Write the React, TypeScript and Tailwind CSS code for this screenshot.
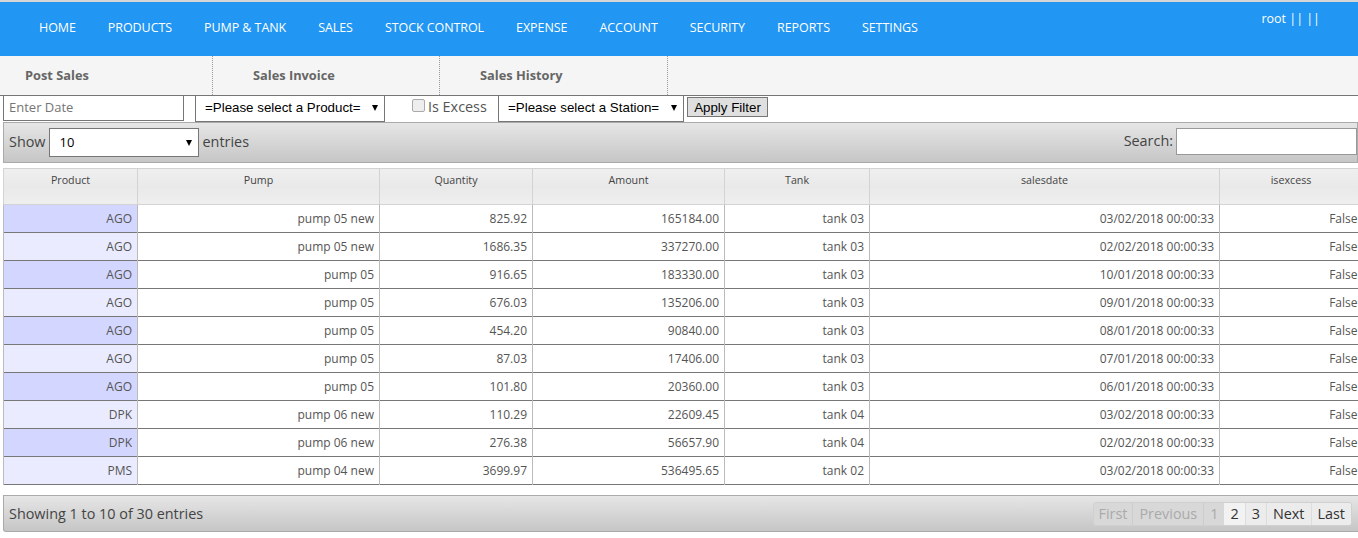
const navItems = ["HOME", "PRODUCTS", "PUMP & TANK", "SALES", "STOCK CONTROL", "EXPENSE", "ACCOUNT", "SECURITY", "REPORTS", "SETTINGS"]

const columns = [
  { name: "Product", width: "w-[134px]" },
  { name: "Pump", width: "w-[242px]" },
  { name: "Quantity", width: "w-[153px]" },
  { name: "Amount", width: "w-[192px]" },
  { name: "Tank", width: "w-[145px]" },
  { name: "salesdate", width: "w-[350px]" },
  { name: "isexcess", width: "w-[143px]" },
]

const rows = [
  ["AGO", "pump 05 new", "825.92", "165184.00", "tank 03", "03/02/2018 00:00:33", "False"],
  ["AGO", "pump 05 new", "1686.35", "337270.00", "tank 03", "02/02/2018 00:00:33", "False"],
  ["AGO", "pump 05", "916.65", "183330.00", "tank 03", "10/01/2018 00:00:33", "False"],
  ["AGO", "pump 05", "676.03", "135206.00", "tank 03", "09/01/2018 00:00:33", "False"],
  ["AGO", "pump 05", "454.20", "90840.00", "tank 03", "08/01/2018 00:00:33", "False"],
  ["AGO", "pump 05", "87.03", "17406.00", "tank 03", "07/01/2018 00:00:33", "False"],
  ["AGO", "pump 05", "101.80", "20360.00", "tank 03", "06/01/2018 00:00:33", "False"],
  ["DPK", "pump 06 new", "110.29", "22609.45", "tank 04", "03/02/2018 00:00:33", "False"],
  ["DPK", "pump 06 new", "276.38", "56657.90", "tank 04", "02/02/2018 00:00:33", "False"],
  ["PMS", "pump 04 new", "3699.97", "536495.65", "tank 02", "03/02/2018 00:00:33", "False"],
]

function Arrow() {
  return <span className="w-0 h-0 border-x-[3.5px] border-x-transparent border-t-[6px] border-t-black" />
}

export default function App() {
  return (
    <div className="w-[1358px] h-[538px] overflow-hidden bg-white font-['Open_Sans',sans-serif] text-[#555]">
      <div className="h-[2px] bg-[#d5d5d5]" />
      <div className="h-[54px] bg-[#2196f3] text-white flex text-[12.5px]">
        <div className="flex pl-[23px]">
          {navItems.map((item) => (
            <a key={item} className="px-4 pt-[17px] whitespace-nowrap tracking-[-0.07px]">{item}</a>
          ))}
        </div>
        <div className="ml-auto mr-[38px] pt-[8px] text-[12.5px]">root || ||</div>
      </div>

      <div className="h-[39px] bg-[#f5f5f5] flex text-[12.8px] font-bold text-[#666]">
        <div className="w-[213px] pl-[25px] pt-[10px] border-r border-dotted border-[#999]">Post Sales</div>
        <div className="w-[227px] pl-[40px] pt-[10px] border-r border-dotted border-[#999]">Sales Invoice</div>
        <div className="w-[228px] pl-[40px] pt-[10px] border-r border-dotted border-[#999]">Sales History</div>
      </div>

      <div className="h-[27px] border-t border-[#767676] flex items-start font-['Liberation_Sans',sans-serif] text-[13.33px] text-black">
        <div className="ml-[3px] w-[181px] h-[25px] border border-[#767676] border-t-0 pl-[5px] pt-[2px] font-['Open_Sans',sans-serif] text-[13px] text-[#757575]">Enter Date</div>
        <div className="ml-[11px] w-[190px] h-[26px] border border-[#767676] border-t-0 flex items-center justify-between pl-[9px] pr-[6px] pb-[1px] whitespace-nowrap">
          <span>=Please select a Product=</span>
          <Arrow />
        </div>
        <input type="checkbox" className="ml-[27px] mt-[3px] w-[13px] h-[13px] appearance-none bg-[#eeeeee] border border-[#aaa] rounded-[2px]" />
        <span className="ml-[3px] w-[70px] font-['Open_Sans',sans-serif] text-[14.4px] text-[#555]">Is Excess</span>
        <div className="w-[186px] h-[26px] border border-[#767676] border-t-0 flex items-center justify-between pl-[9px] pr-[6px] pb-[1px] whitespace-nowrap">
          <span>=Please select a Station=</span>
          <Arrow />
        </div>
        <button className="ml-[3px] mt-[1px] w-[81px] h-[20px] bg-[#dfdfdf] border border-[#767676] text-center">Apply Filter</button>
      </div>

      <div className="ml-[3px] h-[41px] border border-[#aaa] bg-gradient-to-b from-[#e6e6e6] to-[#c6c6c6] flex items-center justify-between text-[14.4px] text-[#444]">
        <div className="flex items-center pl-[5px]">
          <span className="-mt-[2px]">Show</span>
          <div className="ml-[3px] w-[150px] h-[29px] bg-white border border-[#767676] flex items-center justify-between pl-[10px] pr-[6px] text-[13px] text-black">
            <span>10</span>
            <Arrow />
          </div>
          <span className="ml-[4px] -mt-[2px]">entries</span>
        </div>
        <div className="flex items-center">
          <span className="mr-[3px] -mt-[4px]">Search:</span>
          <div className="w-[181px] h-[27px] -mt-[2px] bg-white border border-[#999]" />
        </div>
      </div>

      <table className="ml-[3px] mt-[5px] table-fixed border-collapse w-[1359px] text-[12px] text-[#555]">
        <thead>
          <tr className="h-[36px]">
            {columns.map((col) => (
              <th key={col.name} className={`${col.width} align-top pt-[3px] font-normal text-[10.7px] text-[#444] bg-gradient-to-b from-[#efefef] via-[#e9e9e9] to-[#efefef] border border-[#d3d3d3]`}>
                {col.name}
              </th>
            ))}
          </tr>
        </thead>
        <tbody>
          {rows.map((row, i) => (
            <tr key={i} className="h-[28px] border-b border-[#777]">
              {row.map((cell, j) => (
                <td
                  key={j}
                  className={`text-right pr-[5px] pt-[1px] whitespace-nowrap border-l border-[#bbb] ${j === 0 ? (i % 2 === 0 ? "bg-[#d3d6ff]" : "bg-[#eaebff]") : ""}`}
                >
                  {cell}
                </td>
              ))}
            </tr>
          ))}
        </tbody>
      </table>

      <div className="ml-[3px] mt-[10px] h-[37px] rounded-bl-[3px] border-t border-b border-l border-[#aaa] bg-gradient-to-b from-[#e6e6e6] to-[#c6c6c6] flex items-center justify-between text-[14.4px] text-[#444]">
        <span className="pl-[5px]">Showing 1 to 10 of 30 entries</span>
        <div className="flex mr-[6px] h-[24px] rounded-[3px] leading-[22px] border border-[#d0d0d0] overflow-hidden">
          <span className="px-[5px] text-[#aaa] bg-[#d8d8d8] border-r border-[#ccc]">First</span>
          <span className="px-[6px] text-[#aaa] bg-[#d8d8d8] border-r border-[#ccc]">Previous</span>
          <span className="px-[6px] text-[#aaa] bg-[#d8d8d8]">1</span>
          <span className="px-[6px] text-[#333] bg-[#f2f2f2] border-r border-[#ddd]">2</span>
          <span className="px-[6px] text-[#333] bg-[#ececec] border-r border-[#ddd]">3</span>
          <span className="px-[6px] text-[#333] bg-[#ececec] border-r border-[#ddd]">Next</span>
          <span className="px-[6px] text-[#333] bg-[#ececec]">Last</span>
        </div>
      </div>
    </div>
  )
}
